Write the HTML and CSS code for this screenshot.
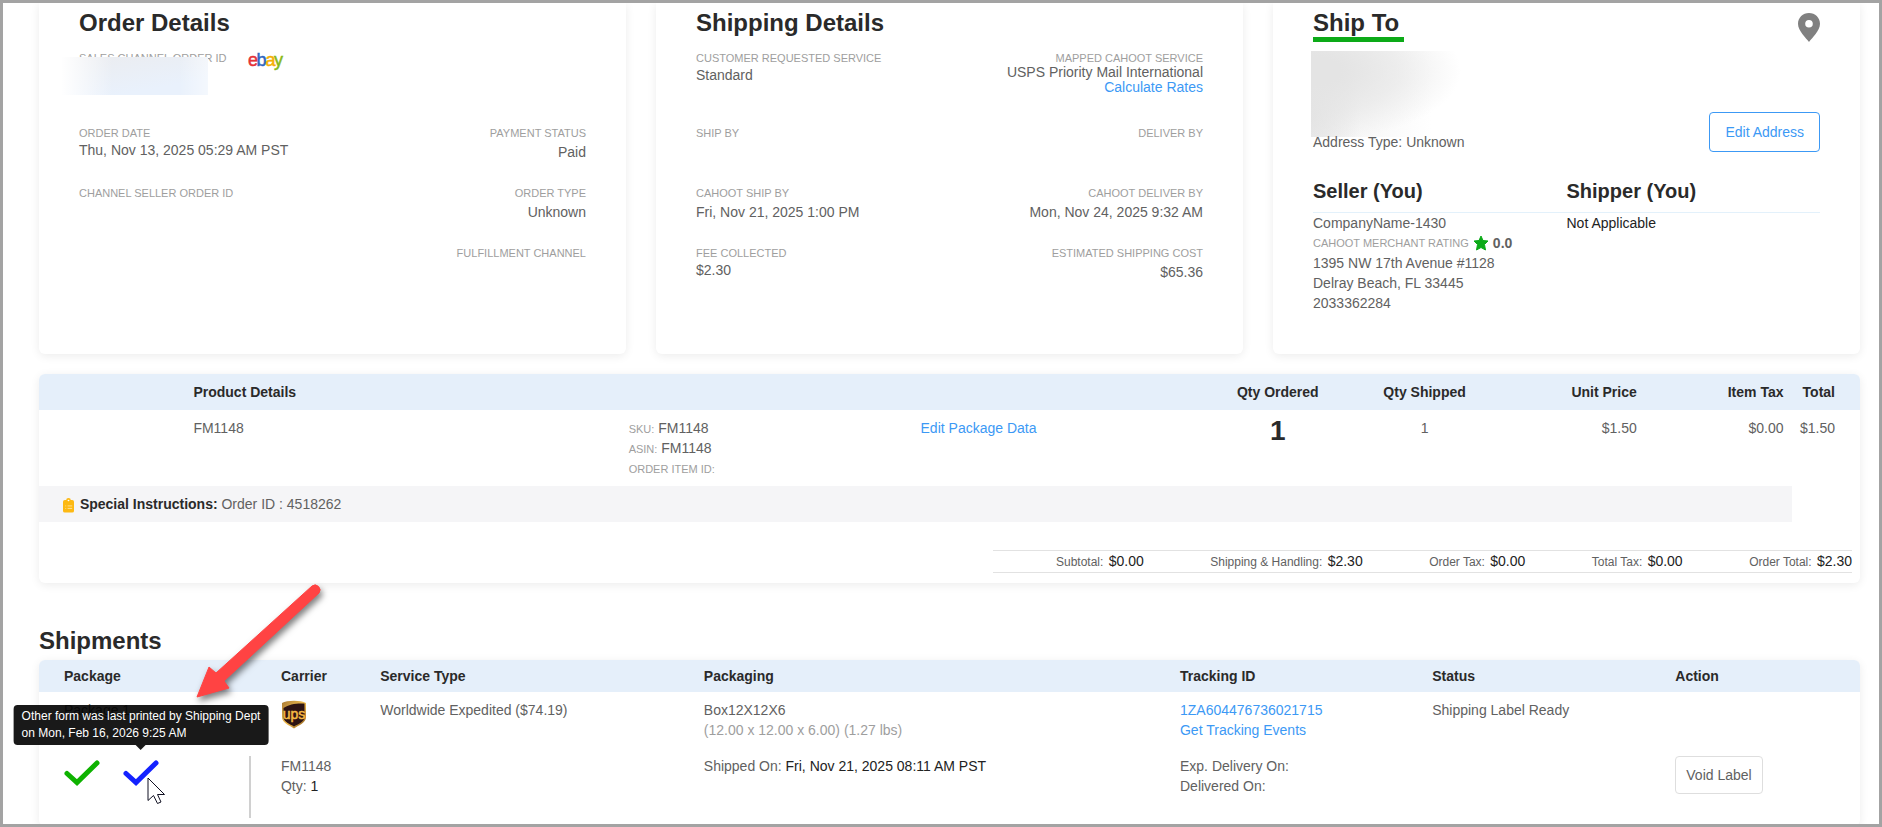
FILE: index.html
```html
<!DOCTYPE html>
<html lang="en">
<head>
  <meta charset="UTF-8" />
  <title>Order Details</title>
  <link rel="stylesheet" href="styles.css">
</head>
<body>
  <main class="page">
    <section class="cards">
      <div class="card">
        <h2>Order Details</h2>
        <div class="field-row tall">
          <div class="field channel">
            <div class="label">SALES CHANNEL ORDER ID</div>
            <span class="redacted redacted-id"></span>
          </div>
          <svg class="ebay" width="38" height="26" viewBox="0 0 38 26" role="img" aria-label="ebay">
            <g font-family="Liberation Sans" font-size="18" stroke-width="0.5">
              <text x="0" y="18" fill="#e53238" stroke="#e53238">e</text>
              <text x="8.500" y="18" fill="#2f66c0" stroke="#2f66c0">b</text>
              <text x="17.500" y="18" fill="#f5af02" stroke="#f5af02">a</text>
              <text x="26" y="18" fill="#86b817" stroke="#86b817">y</text>
            </g>
          </svg>
        </div>
        <div class="field-row">
          <div class="field">
            <div class="label">ORDER DATE</div>
            <div class="value">Thu, Nov 13, 2025 05:29 AM PST</div>
          </div>
          <div class="field right">
            <div class="label">PAYMENT STATUS</div>
            <div class="value low">Paid</div>
          </div>
        </div>
        <div class="field-row">
          <div class="field">
            <div class="label">CHANNEL SELLER ORDER ID</div>
          </div>
          <div class="field right">
            <div class="label">ORDER TYPE</div>
            <div class="value low">Unknown</div>
          </div>
        </div>
        <div class="field-row">
          <div class="field right last">
            <div class="label">FULFILLMENT CHANNEL</div>
          </div>
        </div>
      </div>

      <div class="card">
        <h2>Shipping Details</h2>
        <div class="field-row tall">
          <div class="field">
            <div class="label">CUSTOMER REQUESTED SERVICE</div>
            <div class="value">Standard</div>
          </div>
          <div class="field right tight">
            <div class="label">MAPPED CAHOOT SERVICE</div>
            <div class="value">USPS Priority Mail International</div>
            <a href="#">Calculate Rates</a>
          </div>
        </div>
        <div class="field-row">
          <div class="field">
            <div class="label">SHIP BY</div>
          </div>
          <div class="field right">
            <div class="label">DELIVER BY</div>
          </div>
        </div>
        <div class="field-row">
          <div class="field">
            <div class="label">CAHOOT SHIP BY</div>
            <div class="value low">Fri, Nov 21, 2025 1:00 PM</div>
          </div>
          <div class="field right">
            <div class="label">CAHOOT DELIVER BY</div>
            <div class="value low">Mon, Nov 24, 2025 9:32 AM</div>
          </div>
        </div>
        <div class="field-row">
          <div class="field">
            <div class="label">FEE COLLECTED</div>
            <div class="value">$2.30</div>
          </div>
          <div class="field right">
            <div class="label">ESTIMATED SHIPPING COST</div>
            <div class="value low">$65.36</div>
          </div>
        </div>
      </div>

      <div class="card">
        <div class="card-head">
          <h2 class="ship-to">Ship To</h2>
          <svg class="pin" width="22" height="29" viewBox="0 0 22 29" aria-hidden="true">
            <path fill="#808080" fill-rule="evenodd" d="M11 0C4.900 0 0 4.700 0 10.800C0 18 8 25 11 29C14 25 22 18 22 10.800C22 4.700 17.100 0 11 0ZM11 7a3.800 3.800 0 1 1 0 7.600a3.800 3.800 0 1 1 0-7.600Z"/>
          </svg>
        </div>
        <div class="address">
          <div>
            <span class="redacted redacted-address"></span>
            <div class="value">Address Type: Unknown</div>
          </div>
          <button class="btn-edit">Edit Address</button>
        </div>
        <div class="parties">
          <div class="party">
            <h3>Seller (You)</h3>
            <div class="lines">
              <div>CompanyName-1430</div>
              <div class="rating"><span class="label">CAHOOT MERCHANT RATING</span>
                <svg width="16" height="16" viewBox="0 0 16 16" aria-hidden="true"><path fill="#0caa18" stroke="#0caa18" stroke-linejoin="round" d="M8 1L10 5.500L15 6L11.500 9.500L12.500 15L8 12.500L3.500 15L4.500 9.500L1 6L6 5.500Z"/></svg>
                <b>0.0</b></div>
              <div>1395 NW 17th Avenue #1128</div>
              <div>Delray Beach, FL 33445</div>
              <div>2033362284</div>
            </div>
          </div>
          <div class="party">
            <h3>Shipper (You)</h3>
            <div class="lines dark">Not Applicable</div>
          </div>
        </div>
      </div>
    </section>

    <section class="panel products">
      <table>
        <colgroup>
          <col class="c-thumb"><col class="c-product"><col class="c-ids"><col class="c-edit">
          <col class="c-num"><col class="c-num"><col class="c-num"><col class="c-num"><col>
        </colgroup>
        <thead>
          <tr>
            <th></th>
            <th>Product Details</th>
            <th></th>
            <th></th>
            <th class="center">Qty Ordered</th>
            <th class="center">Qty Shipped</th>
            <th class="num">Unit Price</th>
            <th class="num">Item Tax</th>
            <th class="num">Total</th>
          </tr>
        </thead>
        <tbody>
          <tr>
            <td></td>
            <td>FM1148</td>
            <td>
              <div><span class="label">SKU:</span> FM1148</div>
              <div><span class="label">ASIN:</span> FM1148</div>
              <div><span class="label">ORDER ITEM ID:</span></div>
            </td>
            <td><a href="#">Edit Package Data</a></td>
            <td class="center"><b class="qty">1</b></td>
            <td class="center">1</td>
            <td class="num">$1.50</td>
            <td class="num">$0.00</td>
            <td class="num">$1.50</td>
          </tr>
          <tr>
            <td class="instructions" colspan="8">
              <svg width="11" height="15" viewBox="0 0 12 18" preserveAspectRatio="none" aria-hidden="true"><path fill="#fdb913" d="M2 2.500H3.500A2.500 2.500 0 0 1 8.500 2.500H10A2 2 0 0 1 12 4.500V15.500A2 2 0 0 1 10 17.500H2A2 2 0 0 1 0 15.500V4.500A2 2 0 0 1 2 2.500Z"/><circle cx="6" cy="3" r="1" fill="#fff"/><path stroke="#fee3a0" d="M2.500 9.500h1M5 9.500h5M2.500 12.500h1M5 12.500h5"/></svg>
              <b>Special Instructions:</b> Order ID : 4518262
            </td>
            <td></td>
          </tr>
        </tbody>
      </table>
      <div class="totals">
        <div>Subtotal: <span>$0.00</span></div>
        <div>Shipping &amp; Handling: <span>$2.30</span></div>
        <div>Order Tax: <span>$0.00</span></div>
        <div>Total Tax: <span>$0.00</span></div>
        <div>Order Total: <span>$2.30</span></div>
      </div>
    </section>

    <h2 class="section-title">Shipments</h2>
    <section class="panel shipments">
      <table>
        <colgroup>
          <col class="s-package"><col class="s-carrier"><col class="s-service"><col class="s-packaging">
          <col class="s-tracking"><col class="s-status"><col>
        </colgroup>
        <thead>
          <tr>
            <th>Package</th>
            <th>Carrier</th>
            <th>Service Type</th>
            <th>Packaging</th>
            <th>Tracking ID</th>
            <th>Status</th>
            <th>Action</th>
          </tr>
        </thead>
        <tbody>
          <tr>
            <td>Package 1</td>
            <td>
              <svg class="ups" width="26" height="30" viewBox="0 0 26 30" role="img" aria-label="UPS">
                <defs>
                  <linearGradient id="gold" x1="0" y1="0" x2="1" y2="1"><stop offset="0" stop-color="#a87a35"/><stop offset="0.500" stop-color="#f2bd4e"/><stop offset="1" stop-color="#8a5a1c"/></linearGradient>
                </defs>
                <path fill="url(#gold)" d="M1 3C6 0 20 0 25 3V17C25 23 18 25 13 28.500C8 25 1 23 1 17Z"/>
                <path fill="#2d1413" d="M2.500 8C8 4 16 3 23.500 3.500V17C23.500 22 17 24 13 26.500C9 24 2.500 22 2.500 17Z"/>
                <text x="13" y="19" text-anchor="middle" font-family="Liberation Sans" font-size="14" fill="#f6b944" stroke="#f6b944" stroke-width="0.500">ups</text>
              </svg>
            </td>
            <td>Worldwide Expedited ($74.19)</td>
            <td>
              <div>Box12X12X6</div>
              <div class="muted">(12.00 x 12.00 x 6.00) (1.27 lbs)</div>
            </td>
            <td>
              <div><a href="#">1ZA604476736021715</a></div>
              <div><a href="#">Get Tracking Events</a></div>
            </td>
            <td>Shipping Label Ready</td>
            <td></td>
          </tr>
          <tr>
            <td>
              <div class="printed">
                <svg width="36" height="26" viewBox="0 0 36 26" aria-hidden="true"><path fill="none" stroke="#0eb200" stroke-width="5" stroke-linecap="round" d="M3 13.500L13 22.500L33 3"/></svg>
                <div class="has-tooltip">
                  <svg width="36" height="26" viewBox="0 0 36 26" aria-hidden="true"><path fill="none" stroke="#1422ff" stroke-width="5" stroke-linecap="round" d="M3 13.500L13 22.500L33 3"/></svg>
                  <div class="tooltip" role="tooltip">Other form was last printed by Shipping Dept<br>on Mon, Feb 16, 2026 9:25 AM</div>
                  <svg class="arrow" width="140" height="136" viewBox="0 0 140 136" aria-hidden="true"><path fill="#ff4343" stroke="#ff4343" stroke-linejoin="round" d="M6 118L18 88L25 94L121 7A5 5 0 0 1 128 14L33 102L38 109Z"/></svg>
                  <svg class="cursor" width="20" height="30" viewBox="0 0 20 30" aria-hidden="true"><path fill="#fff" stroke="#111122" stroke-width="1" d="M1 1V23.500L6.500 18.500L10.500 26.500L14 25L10.500 17.500H17.500Z"/></svg>
                </div>
              </div>
            </td>
            <td>
              <div>FM1148</div>
              <div>Qty: <span class="dark">1</span></div>
            </td>
            <td></td>
            <td>Shipped On: <span class="dark">Fri, Nov 21, 2025 08:11 AM PST</span></td>
            <td>
              <div>Exp. Delivery On:</div>
              <div>Delivered On:</div>
            </td>
            <td></td>
            <td><button class="btn-void">Void Label</button></td>
          </tr>
        </tbody>
      </table>
    </section>
  </main>
</body>
</html>
```
FILE: styles.css
```css
* {
  box-sizing: border-box;
}
body {
  margin: 0;
  height: 100vh;
  overflow: hidden;
  font-family: "Liberation Sans", Arial, sans-serif;
  font-size: 14px;
  line-height: 20px;
  color: #616161;
  background-color: #fff;
}
.page {
  height: 100vh;
  overflow: hidden;
  padding: 0 19px 0 36px;
  border: 3px solid #a3a3a3;
}
a {
  color: #3c99f5;
  text-decoration: none;
}
h2 {
  margin: 0;
  font-size: 24px;
  line-height: 28px;
  color: #2a2a2a;
}
h3 {
  margin: 0;
  font-size: 20px;
  line-height: 24px;
  color: #2a2a2a;
}
.label {
  font-size: 11px;
  line-height: 14px;
  color: #9e9e9e;
}
.dark {
  color: #222;
}
.muted {
  color: #9e9e9e;
}

/* top cards */
.cards {
  display: grid;
  grid-template-columns: repeat(3, 1fr);
  gap: 30px;
  margin-bottom: 20px;
}
.card {
  padding: 6px 40px 41px;
  border-radius: 0 0 6px 6px;
  box-shadow: 0 2px 10px rgba(0, 0, 0, 0.08);
}
.field-row {
  display: flex;
  justify-content: space-between;
  min-height: 60px;
}
.field-row.tall {
  min-height: 75px;
  margin-top: 14px;
}
.right {
  text-align: right;
}
.last {
  margin-left: auto;
}
.value {
  line-height: 20px;
}
.value.low {
  padding-top: 2px;
}
.tight {
  display: flex;
  flex-direction: column;
}
.tight .value,
.tight a {
  line-height: 15px;
}
.channel {
  position: relative;
}
.redacted {
  display: block;
}
.redacted-id {
  position: absolute;
  left: -18px;
  top: 6px;
  width: 147px;
  height: 38px;
  background: linear-gradient(to right, #fff, rgba(255, 255, 255, 0) 35%, rgba(255, 255, 255, 0) 80%, rgba(255, 255, 255, 0.5)), linear-gradient(170deg, #ebecef, #e9f1fc 75%);
}
.ebay {
  margin: -3px auto 0 21px;
}
.card-head {
  display: flex;
  justify-content: space-between;
}
.ship-to {
  padding-right: 5px;
  border-bottom: 5px solid #0caa18;
}
.pin {
  margin-top: 4px;
}
.address {
  display: flex;
  justify-content: space-between;
  align-items: flex-end;
  margin-top: 9px;
}
.redacted-address {
  width: 150px;
  height: 86px;
  margin: 0 0 -5px -2px;
  background: radial-gradient(ellipse 150px 70px at 0 20px, #e4e4e4 20%, rgba(228, 228, 228, 0.6) 60%, rgba(255, 255, 255, 0)), radial-gradient(ellipse 50px 90px at 0 60px, #e4e4e4, rgba(255, 255, 255, 0)), linear-gradient(to right, #f2f2f2, #fff 80%);
}
.address .value {
  position: relative;
}
button {
  font-family: inherit;
  font-size: 14px;
  background-color: #fff;
  border-radius: 4px;
  cursor: pointer;
}
.btn-edit {
  height: 40px;
  padding: 0 15px;
  border: 1px solid #3c99f5;
  color: #3c99f5;
}
.parties {
  display: grid;
  grid-template-columns: 1fr 1fr;
  margin-top: 27px;
}
.lines {
  margin-top: 9px;
  border-top: 1px solid #e3f1fb;
}
.rating {
  display: flex;
  align-items: center;
  gap: 4px;
}

/* tables */
.panel {
  border-radius: 6px;
  box-shadow: 0 2px 10px rgba(0, 0, 0, 0.08);
}
table {
  width: 100%;
  table-layout: fixed;
  border-collapse: separate;
  border-spacing: 0;
}
th {
  height: 36px;
  padding: 0 8px;
  text-align: left;
  color: #2a2a2a;
  background-color: #e5effa;
}
th:first-child {
  border-top-left-radius: 6px;
}
th:last-child {
  border-top-right-radius: 6px;
}
td {
  padding: 8px;
  vertical-align: top;
}
.center {
  text-align: center;
}
.num {
  text-align: right;
}
.products .num:last-child {
  padding-right: 25px;
}
.c-thumb {
  width: 8.04%;
}
.c-num {
  width: 8.06%;
}
.c-product {
  width: 23.9%;
}
.c-ids,
.c-edit {
  width: 16.03%;
}
.qty {
  font-size: 28px;
  line-height: 26px;
  color: #2a2a2a;
}
.instructions {
  padding-left: 24px;
  background-color: #f5f5f7;
}
.instructions svg {
  margin-right: 2px;
  vertical-align: middle;
}
.instructions b {
  color: #2a2a2a;
}
.totals {
  display: flex;
  justify-content: space-between;
  margin: 28px 8px 0 auto;
  width: 859px;
  padding-left: 63px;
  border-top: 1px solid #e2e2e2;
  border-bottom: 1px solid #e2e2e2;
  font-size: 12px;
}
.totals span {
  margin-left: 2px;
  font-size: 14px;
  color: #222;
}
.products {
  padding-bottom: 10px;
}

/* shipments */
.section-title {
  margin: 44px 0 5px;
}
.shipments th {
  height: 32px;
}
.shipments th:first-child,
.shipments td:first-child {
  padding-left: 25px;
}
.s-package {
  width: 12.85%;
}
.s-carrier {
  width: 5.45%;
}
.s-service {
  width: 17.77%;
}
.s-packaging {
  width: 26.15%;
}
.s-tracking {
  width: 13.85%;
}
.s-status {
  width: 13.35%;
}
.ups {
  display: block;
}
.printed {
  display: flex;
  align-items: flex-start;
  gap: 23px;
  height: 62px;
  margin-right: 14px;
  padding-top: 4px;
  border-right: 2px solid #d0d0d0;
}
.printed svg {
  display: block;
}
.has-tooltip {
  position: relative;
}
.tooltip {
  position: absolute;
  bottom: calc(100% + 15px);
  left: 50%;
  padding: 3px 8px;
  border-radius: 4px;
  background-color: rgba(0, 0, 0, 0.9);
  color: #fff;
  font-size: 12px;
  line-height: 17px;
  white-space: nowrap;
  transform: translateX(-50%);
}
.tooltip::after {
  content: "";
  position: absolute;
  top: 100%;
  left: 50%;
  margin-left: -5px;
  border: 5px solid transparent;
  border-top-color: rgba(0, 0, 0, 0.9);
  border-bottom-width: 0;
}
.arrow {
  position: absolute;
  left: 68px;
  top: -181px;
  filter: drop-shadow(2px 4px 3px rgba(0, 0, 0, 0.5));
}
.cursor {
  position: absolute;
  left: 24px;
  top: 17px;
}
.btn-void {
  height: 38px;
  padding: 0 10px;
  border: 1px solid #dedede;
  color: #616161;
}
```
